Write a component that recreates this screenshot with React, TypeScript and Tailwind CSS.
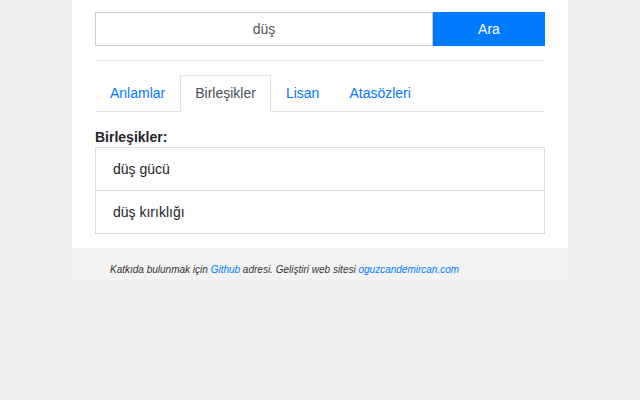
const tabs = ['Anlamlar', 'Birleşikler', 'Lisan', 'Atasözleri'];
const items = ['düş gücü', 'düş kırıklığı'];

export default function App() {
  return (
    <div className="min-h-[400px] bg-[#eeeeee] font-['Liberation_Sans',Arial,sans-serif]">
      <div className="mx-auto w-[496px] bg-white">
        <div className="px-[23px] pt-3 pb-[14px]">
          <form className="flex h-[34px]">
            <input
              className="min-w-0 flex-1 border border-[#cccccc] text-center text-[14px] text-[#555555] outline-none"
              defaultValue="düş"
            />
            <button type="button" className="w-[112px] bg-[#007bff] text-[14px] text-white">
              Ara
            </button>
          </form>

          <hr className="mt-[14px] border-t border-[#e5e5e5]" />

          <ul className="mt-[14px] flex border-b border-[#dee2e6]">
            {tabs.map((t) => (
              <li key={t} className="-mb-px">
                <a
                  className={
                    t === 'Birleşikler'
                      ? 'flex h-[37px] items-center border border-[#dee2e6] border-b-white bg-white px-[14px] text-[14px] text-[#495057]'
                      : 'flex h-[37px] items-center border border-transparent px-[14px] text-[14px] text-[#007bff]'
                  }
                >
                  {t}
                </a>
              </li>
            ))}
          </ul>

          <h4 className="mt-[15px] text-[14px] leading-[20px] font-bold text-[#212529]">Birleşikler:</h4>
          <ul className="border border-[#dddddd]">
            {items.map((i, idx) => (
              <li
                key={i}
                className={
                  idx === 0
                    ? 'flex h-[42px] items-center pl-[17px] text-[14px] text-[#212529]'
                    : 'flex h-[43px] items-center border-t border-[#dddddd] pl-[17px] text-[14px] text-[#212529]'
                }
              >
                {i}
              </li>
            ))}
          </ul>
        </div>

        <footer className="flex h-[33px] items-end bg-[#f3f3f3] px-[38px] pb-[4px] text-[10px] italic text-[#333333]">
          <p>
            Katkıda bulunmak için <a className="text-[#007bff]">Github</a> adresi. Geliştiri web sitesi{' '}
            <a className="text-[#007bff]">oguzcandemircan.com</a>
          </p>
        </footer>
      </div>
    </div>
  );
}
